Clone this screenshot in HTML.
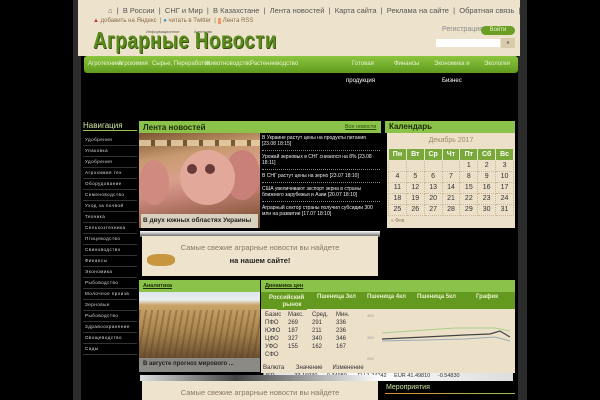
<!DOCTYPE html>
<html><head><meta charset="utf-8"><style>
*{margin:0;padding:0;box-sizing:border-box}
body{width:600px;height:400px;background:#000;position:relative;overflow:hidden;font-family:"Liberation Sans","DejaVu Sans",sans-serif}
.a{position:absolute}
.frame{left:73px;top:0;width:454px;height:400px;background:#2b2b2b}
.inner{left:81px;top:0;width:437px;height:400px;background:#000}
.head{left:78px;top:0;width:442px;height:56px;background:#ede3cc}
.top{top:6px;left:108px;font-size:7.5px;color:#555;white-space:nowrap}
.top2{top:18px;left:93px;font-size:6px;color:#8a6a4a;white-space:nowrap}
.logo{left:93px;top:29px;font-family:"Liberation Sans",sans-serif;font-weight:bold;font-size:23px;color:#5a8a1c;line-height:22px;text-shadow:1px 1px 0 #33500d;transform:scaleX(0.82);transform-origin:0 0;white-space:nowrap;letter-spacing:0.5px}
.nav{left:84px;top:56px;width:434px;height:17px;background:linear-gradient(#8cc63f,#5f9a1e);border-radius:3px;font-size:6px;color:#e8f4d0;white-space:nowrap}
.nav span{position:absolute;top:5px}
.wt{color:#fff;font-size:6px}
.lnav{left:83px;top:121px;width:54px}
.lnav .h{font-size:8px;color:#cfe9a0;border-bottom:1px solid #9bc24a;height:10px;margin-bottom:4px}
.lnav div.i{height:11px;border-bottom:1px solid #333;font-size:4.5px;color:#ddd;padding-left:2px;line-height:10px;letter-spacing:.5px}
.ban{background:#eee3cc;text-align:center;color:#8a7a60;font-size:7.5px}
table{border-collapse:collapse}
.cal td,.cal th{width:18px;height:11px;padding:0;line-height:10px;text-align:center;font-size:7px;border:1px dotted #c9b79a;color:#333}
.cal th{background:#79a93a;color:#fff;font-weight:bold;border:1px solid #ede3cc;height:12px}
.dt td{padding:0;height:8px;line-height:8px}
</style></head><body>
<div class="a frame"></div><div class="a inner"></div>
<div class="a head"></div>
<div class="a top">⌂ &nbsp;| &nbsp;В России &nbsp;| &nbsp;СНГ и Мир &nbsp;| &nbsp;В Казахстане &nbsp;| &nbsp;Лента новостей &nbsp;| &nbsp;Карта сайта &nbsp;| &nbsp;Реклама на сайте &nbsp;| &nbsp;Обратная связь &nbsp;|</div>
<div class="a top2"><span style="color:#c33">▲</span> добавить на Яндекс &nbsp;| <span style="color:#39c">●</span> читать в Twitter &nbsp;| <span style="background:#e96;color:#e96">■</span> Лента RSS</div>
<div class="a" style="left:146px;top:29px;font-size:4px;color:#555">Информационное&nbsp;&nbsp;&nbsp;&nbsp;&nbsp;&nbsp;&nbsp;&nbsp;&nbsp;&nbsp;&nbsp;&nbsp;&nbsp;Агентство</div>
<div class="a logo">Аграрные Новости</div>
<div class="a" style="left:442px;top:26px;font-size:7px;color:#888">Регистрация</div>
<div class="a" style="left:481px;top:26px;width:34px;height:9px;background:#6a9f23;border-radius:5px;color:#e6f2c9;font-size:6px;text-align:center;line-height:9px">Войти</div>
<div class="a" style="left:436px;top:39px;width:64px;height:8px;background:#fff"></div>
<div class="a" style="left:501px;top:38px;width:14px;height:10px;background:#d8cbaa;font-size:5px;text-align:center;line-height:10px">»</div>
<div class="a nav"><span style="left:4px">Агротехника</span><span style="left:34px">Агрохимия</span><span style="left:68px">Сырье, Переработка</span><span style="left:121px">Животноводство</span><span style="left:166px">Растениеводство</span><span style="left:268px">Готовая</span><span style="left:310px">Финансы</span><span style="left:350px">Экономика и</span><span style="left:400px">Экология</span></div>
<div class="a wt" style="left:346px;top:78px">продукция</div>
<div class="a wt" style="left:442px;top:78px">Бизнес</div>

<div class="a lnav"><div class="h">Навигация</div>
<div class="i">Удобрения</div><div class="i">Упаковка</div><div class="i">Удобрения</div><div class="i">Агрохимия тех</div><div class="i">Оборудование</div><div class="i">Семеноводство</div><div class="i">Уход за почвой</div><div class="i">Техника</div><div class="i">Сельхозтехника</div><div class="i">Птицеводство</div><div class="i">Свиноводство</div><div class="i">Финансы</div><div class="i">Экономика</div><div class="i">Рыбоводство</div><div class="i">Молочное произв</div><div class="i">Зерновые</div><div class="i">Рыбоводство</div><div class="i">Здравоохранение</div><div class="i">Овощеводство</div><div class="i">Сады</div></div>

<div class="a" style="left:139px;top:121px;width:242px;height:12px;background:#8bc34a"></div>
<div class="a" style="left:143px;top:123px;font-size:8px;font-weight:bold;color:#1c2a08">Лента новостей</div>
<div class="a" style="left:345px;top:124px;font-size:5.5px;color:#2a4a0a;text-decoration:underline">Все новости</div>
<div class="a" style="left:139px;top:133px;width:121px;height:95px;background:linear-gradient(170deg,#7a5530 0%,#c89a70 25%,#d9a08c 45%,#c7857a 60%,#9c6650 80%,#6a4a30 100%)"></div>
<div class="a" style="left:139px;top:140px;width:121px;height:6px;background:repeating-linear-gradient(90deg,#e8d2a8 0 12px,#6a4a2a 12px 16px);opacity:.8"></div>
<div class="a" style="left:139px;top:160px;width:30px;height:45px;border-radius:50%;background:#d08a80"></div>
<div class="a" style="left:225px;top:150px;width:35px;height:50px;border-radius:50%;background:#c98078"></div>
<div class="a" style="left:180px;top:150px;width:55px;height:55px;border-radius:50%;background:#e2a99a"></div>
<div class="a" style="left:187px;top:164px;width:10px;height:10px;border-radius:50%;background:#6a3a38"></div>
<div class="a" style="left:205px;top:164px;width:10px;height:10px;border-radius:50%;background:#6a3a38"></div>
<div class="a" style="left:141px;top:214px;width:117px;height:14px;background:#d9d0bf;font-size:6.5px;font-weight:bold;color:#222;padding:3px 2px">В двух южных областях Украины</div>
<div class="a" style="left:262px;top:135px;width:118px;font-size:5px;color:#eee;line-height:6px">
<div style="border-bottom:1px dotted #888;padding-bottom:3px;margin-bottom:3px">В Украине растут цены на продукты питания [23.08 18:15]</div>
<div style="border-bottom:1px dotted #888;padding-bottom:3px;margin-bottom:3px">Урожай зерновых в СНГ снизился на 8% [23.08 18:11]</div>
<div style="border-bottom:1px dotted #888;padding-bottom:3px;margin-bottom:3px">В СНГ растут цены на зерно [23.07 18:10]</div>
<div style="border-bottom:1px dotted #888;padding-bottom:3px;margin-bottom:3px">США увеличивают экспорт зерна в страны ближнего зарубежья и Азии [20.07 18:10]</div>
<div>Аграрный сектор страны получил субсидии 300 млн на развитие [17.07 18:10]</div></div>

<div class="a" style="left:140px;top:231px;width:240px;height:6px;background:linear-gradient(#fff,#555)"></div>
<div class="a ban" style="left:142px;top:236px;width:236px;height:40px;padding-top:7px">Самые свежие аграрные новости вы найдете<br><b style="color:#222;line-height:17px">на нашем сайте!</b></div>
<div class="a" style="left:147px;top:254px;width:28px;height:12px;background:#c7963f;border-radius:40%"></div>

<div class="a" style="left:385px;top:121px;width:130px;height:12px;background:#8bc34a"></div>
<div class="a" style="left:389px;top:122px;font-size:8px;font-weight:bold;color:#1c2a08">Календарь</div>
<div class="a" style="left:387px;top:133px;width:128px;height:95px;background:#ede0c8"></div>
<div class="a" style="left:387px;top:137px;width:128px;text-align:center;font-size:7px;color:#9a8a6a">Декабрь 2017</div>
<table class="a cal" style="left:388px;top:148px;width:126px"><tr><th>Пн</th><th>Вт</th><th>Ср</th><th>Чт</th><th>Пт</th><th>Сб</th><th>Вс</th></tr>
<tr><td></td><td></td><td></td><td></td><td>1</td><td>2</td><td>3</td></tr>
<tr><td>4</td><td>5</td><td>6</td><td>7</td><td>8</td><td>9</td><td>10</td></tr>
<tr><td>11</td><td>12</td><td>13</td><td>14</td><td>15</td><td>16</td><td>17</td></tr>
<tr><td>18</td><td>19</td><td>20</td><td>21</td><td>22</td><td>23</td><td>24</td></tr>
<tr><td>25</td><td>26</td><td>27</td><td>28</td><td>29</td><td>30</td><td>31</td></tr></table>
<div class="a" style="left:391px;top:218px;font-size:5px;color:#8a7a60">« Фев</div>

<div class="a" style="left:139px;top:280px;width:121px;height:12px;background:#8bc34a;font-size:5.5px;font-weight:bold;color:#1c2a08;padding:3px 4px;text-decoration:underline">Аналитика</div>
<div class="a" style="left:139px;top:292px;width:121px;height:66px;background:linear-gradient(#dde6ec 0%,#e8ecee 12%,#c8a468 20%,#a9854e 60%,#6a5030 100%)"></div>
<div class="a" style="left:139px;top:310px;width:121px;height:48px;background:repeating-linear-gradient(100deg,rgba(90,60,30,.35) 0 2px,transparent 2px 6px)"></div>
<div class="a" style="left:139px;top:358px;width:121px;height:14px;background:#8c8a84;font-size:6px;font-weight:bold;color:#222;padding:3px 4px;white-space:nowrap">В августе прогноз мирового ...</div>

<div class="a" style="left:261px;top:280px;width:254px;height:12px;background:#8bc34a;font-size:5.5px;font-weight:bold;color:#1c2a08;padding:3px 4px;text-decoration:underline">Динамика цен</div>
<div class="a" style="left:261px;top:292px;width:254px;height:17px;background:#64991f;color:#e6f2c9;font-size:6px;font-weight:bold">
<span class="a" style="left:8px;top:2px;text-align:center;line-height:9px">Российский</span><span class="a" style="left:56px;top:2px">Пшеница 3кл</span><span class="a" style="left:106px;top:2px">Пшеница 4кл</span><span class="a" style="left:156px;top:2px">Пшеница 5кл</span><span class="a" style="left:215px;top:2px">График</span></div>
<div class="a" style="left:261px;top:309px;width:254px;height:64px;background:#ede0c8"></div>
<div class="a" style="left:277px;top:301px;width:30px;height:9px;background:#64991f;color:#e6f2c9;font-size:6px;font-weight:bold;text-align:center;line-height:9px">рынок</div>
<table class="a dt" style="left:265px;top:311px;font-size:6px;color:#333"><tbody>
<tr><td style="width:23px">Базис</td><td style="width:24px">Макс.</td><td style="width:24px">Сред.</td><td style="width:20px">Мин.</td></tr>
<tr><td>ПФО</td><td>269</td><td>291</td><td>336</td></tr>
<tr><td>ЮФО</td><td>187</td><td>211</td><td>236</td></tr>
<tr><td>ЦФО</td><td>327</td><td>340</td><td>346</td></tr>
<tr><td>УФО</td><td>155</td><td>162</td><td>167</td></tr>
<tr><td>СФО</td><td></td><td></td><td></td></tr></tbody></table>
<svg class="a" style="left:345px;top:312px" width="170" height="50"><text x="22" y="5" font-size="4" fill="#999" font-family="Liberation Sans">400</text><text x="22" y="27" font-size="4" fill="#999" font-family="Liberation Sans">300</text><text x="22" y="48" font-size="4" fill="#999" font-family="Liberation Sans">200</text>
<path d="M37 21 L80 18 L110 16 L150 16 L165 19" stroke="#a9d08a" fill="none"/>
<path d="M37 27 L80 25 L120 23 L145 22 L155 19 L165 25" stroke="#444" fill="none" stroke-width="1.2"/>
<path d="M37 29 L80 28 L120 27 L150 25 L165 29" stroke="#9ab" fill="none"/></svg>
<div class="a" style="left:263px;top:365px;font-size:6px;color:#333;white-space:nowrap">Валюта&nbsp;&nbsp;&nbsp;&nbsp;&nbsp;&nbsp;&nbsp;Значение&nbsp;&nbsp;&nbsp;&nbsp;&nbsp;&nbsp;Изменение</div>
<div class="a" style="left:263px;top:373px;width:250px;height:8px;background:linear-gradient(90deg,#ddd,#fff 40%,#ddd);font-size:5.5px;color:#333;white-space:nowrap">USD&nbsp;&nbsp;&nbsp;&nbsp;&nbsp;&nbsp;&nbsp;&nbsp;&nbsp;&nbsp;&nbsp;&nbsp;&nbsp;33.16930&nbsp;&nbsp;&nbsp;&nbsp;&nbsp;-0.34980&nbsp;&nbsp;&nbsp;&nbsp;&nbsp;&nbsp;&nbsp;EU 1.24242&nbsp;&nbsp;&nbsp;&nbsp;&nbsp;EUR 41.49810&nbsp;&nbsp;&nbsp;&nbsp;&nbsp;-0.54830</div>
<div class="a" style="left:140px;top:375px;width:240px;height:6px;background:linear-gradient(90deg,#ddd,#444 40%,#fff)"></div>
<div class="a ban" style="left:142px;top:381px;width:236px;height:19px;padding-top:7px">Самые свежие аграрные новости вы найдете</div>
<div class="a" style="left:386px;top:384px;font-size:7px;color:#cfe9a0">Мероприятия</div>
<div class="a" style="left:385px;top:393px;width:130px;height:1px;background:linear-gradient(90deg,#e08a30,#9bc24a)"></div>
</body></html>
